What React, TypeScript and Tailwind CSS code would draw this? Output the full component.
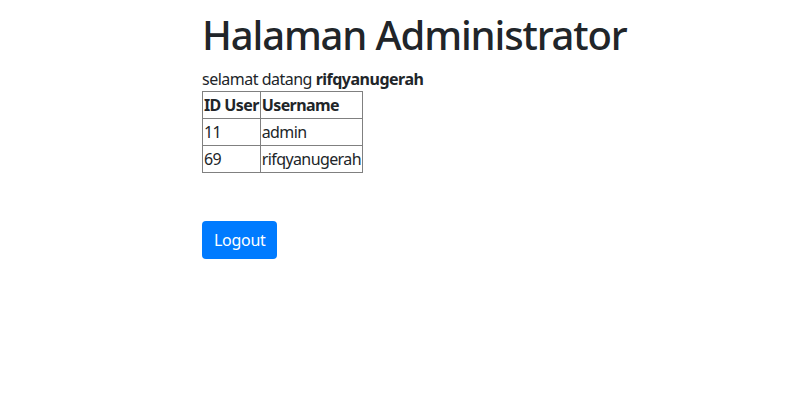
export default function App() {
  const users = [
    { id: "11", username: "admin" },
    { id: "69", username: "rifqyanugerah" },
  ];

  return (
    <div className="min-h-[401px] bg-white text-[#212529] text-base leading-6 font-['Noto_Sans',sans-serif]">
      <div className="ml-[202px] pt-[11px]">
        <h1 className="mb-2 text-[40px] font-medium leading-[48px] tracking-[-1.15px]">Halaman Administrator</h1>
        <p className="tracking-[-0.5px]">
          selamat datang <b className="font-bold">rifqyanugerah</b>
        </p>
        <table className="border-collapse border border-[#808080] tracking-[-0.6px]">
          <thead>
            <tr>
              <th className="border border-[#808080] p-px text-left font-bold">ID User</th>
              <th className="border border-[#808080] p-px text-left font-bold">Username</th>
            </tr>
          </thead>
          <tbody>
            {users.map((u) => (
              <tr key={u.id}>
                <td className="border border-[#808080] p-px">{u.id}</td>
                <td className="border border-[#808080] p-px">{u.username}</td>
              </tr>
            ))}
          </tbody>
        </table>
        <div className="h-12" />
        <button className="h-[38px] rounded bg-[#007bff] px-3 text-white tracking-[-0.3px]">Logout</button>
      </div>
    </div>
  );
}
